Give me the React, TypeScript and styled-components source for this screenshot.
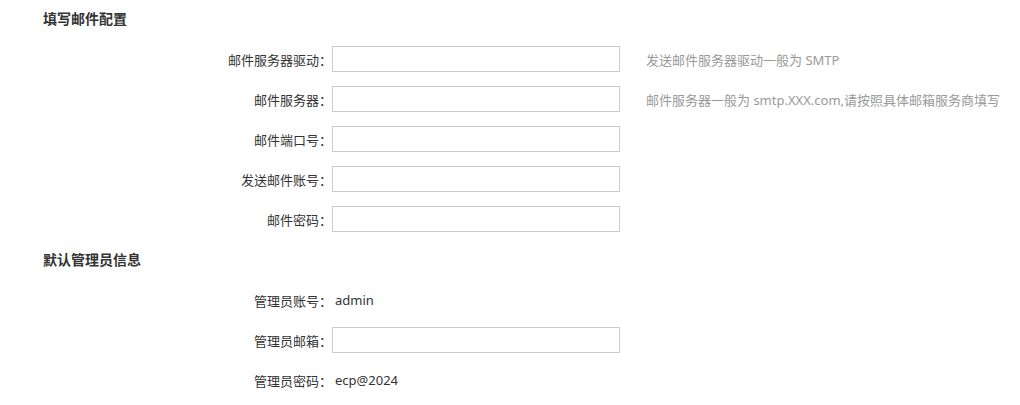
import React from "react";
import styled, { createGlobalStyle } from "styled-components";

const GlobalStyle = createGlobalStyle`
  html, body {
    margin: 0;
    padding: 0;
    background: #fff;
  }
  body {
    font-family: "Noto Sans", "Noto Sans CJK SC", sans-serif;
    color: #333;
  }
`;

type Field = {
  label: string;
  hint?: string;
  value?: string;
};

const mailFields: Field[] = [
  { label: "邮件服务器驱动：", hint: "发送邮件服务器驱动一般为 SMTP" },
  { label: "邮件服务器：", hint: "邮件服务器一般为 smtp.XXX.com,请按照具体邮箱服务商填写" },
  { label: "邮件端口号：" },
  { label: "发送邮件账号：" },
  { label: "邮件密码：" },
];

const adminFields: Field[] = [
  { label: "管理员账号：", value: "admin" },
  { label: "管理员邮箱：" },
  { label: "管理员密码：", value: "ecp@2024" },
];

const App = () => {
  const renderRow = (f: Field) => (
    <Row key={f.label}>
      <Label>{f.label}</Label>
      {f.value !== undefined ? <Value>{f.value}</Value> : <Input type="text" />}
      {f.hint && <Hint>{f.hint}</Hint>}
    </Row>
  );

  return (
    <>
      <GlobalStyle />
      <Page>
        <Section>
          <Title>填写邮件配置</Title>
          {mailFields.map(renderRow)}
        </Section>
        <Section>
          <Title>默认管理员信息</Title>
          {adminFields.map(renderRow)}
        </Section>
      </Page>
    </>
  );
};

export default App;

const Page = styled.div`
  width: 1020px;
  padding: 5px 0 0 43px;
  box-sizing: border-box;
`;

const Section = styled.div`
  display: flex;
  flex-direction: column;
`;

const Title = styled.h3`
  margin: 0 0 13px;
  height: 28px;
  line-height: 28px;
  font-size: 14px;
  font-weight: bold;
  color: #333;
`;

const Row = styled.div`
  display: flex;
  align-items: center;
  height: 26px;
  margin-bottom: 14px;
`;

const Label = styled.label`
  width: 289px;
  flex-shrink: 0;
  text-align: right;
  font-size: 13px;
  color: #333;
  white-space: nowrap;
`;

const Input = styled.input`
  width: 288px;
  height: 26px;
  box-sizing: border-box;
  border: 1px solid #ccc;
  border-radius: 0;
  padding: 0 6px;
  margin: 0;
  font-size: 13px;
  outline: none;
`;

const Value = styled.span`
  padding-left: 3px;
  font-size: 13px;
  color: #333;
`;

const Hint = styled.span`
  margin-left: 26px;
  font-size: 13px;
  color: #999;
  white-space: nowrap;
`;
